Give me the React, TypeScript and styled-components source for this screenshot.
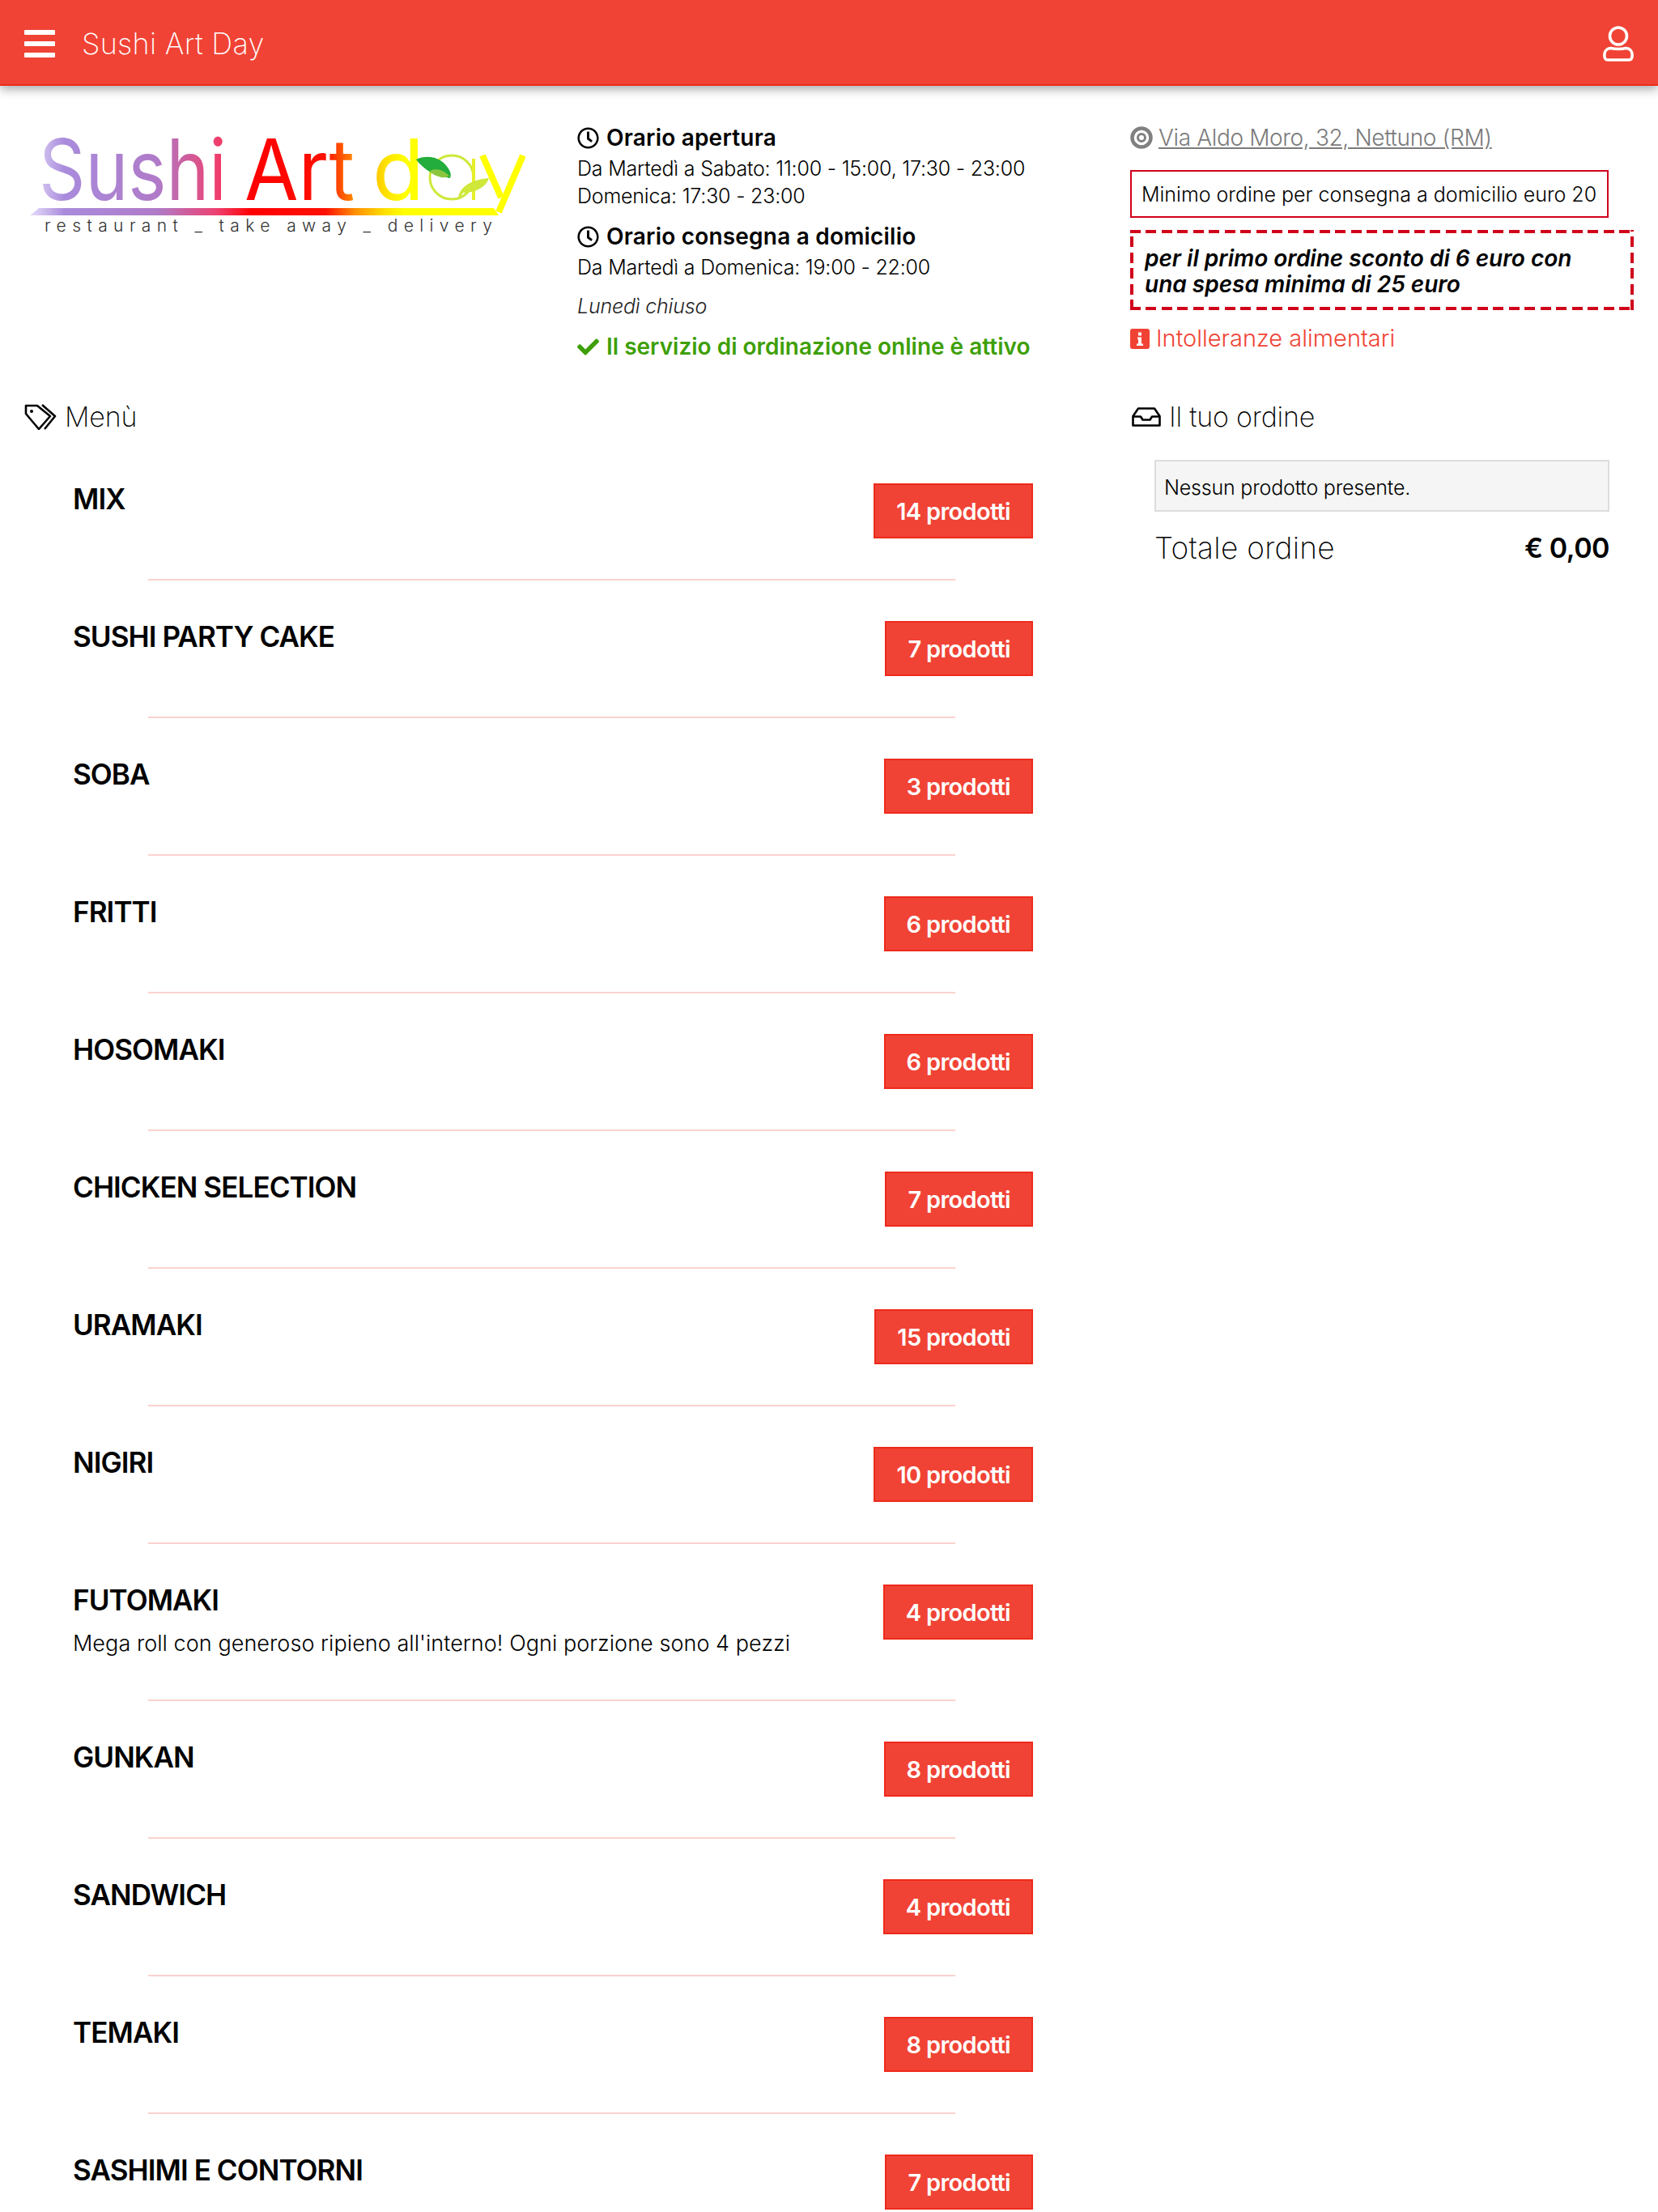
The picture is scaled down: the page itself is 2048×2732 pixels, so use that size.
import styled, { createGlobalStyle } from "styled-components";
import { FaCheck, FaRegClock } from "react-icons/fa";

const GlobalStyle = createGlobalStyle`
    html, body {
        margin: 0;
        padding: 0;
        overflow: hidden;
        background: #fff;
    }
    body {
        font-family: "Inter", "Liberation Sans", sans-serif;
        color: #000;
    }
`;

const TopBar = styled.header`
    height: 106px;
    box-sizing: border-box;
    background: #f04335;
    border-bottom: 2px solid #ee2a1b;
    box-shadow: 0 4px 12px rgba(0, 0, 0, 0.35);
    display: flex;
    align-items: center;
    padding: 4px 30px 0;
    color: #fff;
`;

const MenuIcon = styled.div`
    width: 38px;
    height: 34px;
    display: flex;
    flex-direction: column;
    justify-content: space-between;
    margin-right: 33px;
    span {
        display: block;
        height: 6px;
        border-radius: 1px;
        background: #fff;
    }
`;

const BarTitle = styled.div`
    font-size: 36px;
    font-weight: 200;
    letter-spacing: 0.3px;
    flex: 1;
`;

const TopRow = styled.section`
    display: grid;
    grid-template-columns: 713px 683px 1fr;
    padding-top: 47px;
`;

const LogoCell = styled.div`
    margin-top: -11px;
    padding-left: 37px;
`;

const Hours = styled.div`
    display: flex;
    flex-direction: column;
`;

const InfoTitle = styled.div<{ $gap?: number }>`
    display: flex;
    align-items: center;
    gap: 9px;
    font-size: 28px;
    line-height: 34px;
    font-weight: 600;
    letter-spacing: 0.2px;
    margin-top: ${(props) => props.$gap ?? 0}px;
    margin-bottom: 4px;
    svg {
        width: 27px;
        height: 27px;
    }
`;

const InfoLine = styled.div`
    font-size: 25px;
    line-height: 34px;
    font-weight: 300;
    letter-spacing: -0.2px;
`;

const ClosedNote = styled.div`
    font-size: 25px;
    line-height: 34px;
    font-weight: 300;
    font-style: italic;
    letter-spacing: -0.2px;
    margin-top: 14px;
    color: #222;
`;

const ActiveNote = styled.div`
    display: flex;
    align-items: center;
    gap: 9px;
    margin-top: 16px;
    font-size: 28px;
    line-height: 34px;
    font-weight: 600;
    color: #3e9f07;
    svg {
        width: 27px;
        height: 27px;
    }
`;

const SideInfo = styled.div`
    display: flex;
    flex-direction: column;
    align-items: flex-start;
`;

const Address = styled.a`
    display: flex;
    align-items: center;
    gap: 7px;
    font-size: 28px;
    line-height: 34px;
    font-weight: 300;
    letter-spacing: -0.35px;
    color: #7b7b7b;
    span {
        text-decoration: underline;
    }
`;

const MinimumBox = styled.div`
    box-sizing: border-box;
    width: 591px;
    height: 59px;
    margin-top: 23px;
    border: 2px solid #d0021b;
    padding: 0 12px;
    display: flex;
    align-items: center;
    font-size: 25px;
    font-weight: 300;
    white-space: nowrap;
`;

const dash = "#d0021b 0 13px, transparent 13px 19.5px";

const PromoBox = styled.div`
    box-sizing: border-box;
    width: 622px;
    height: 99px;
    margin-top: 15px;
    padding: 19px 18px 0;
    font-size: 28px;
    line-height: 32px;
    font-weight: 600;
    font-style: italic;
    background:
        repeating-linear-gradient(90deg, ${dash}) top / 100% 4px no-repeat,
        repeating-linear-gradient(90deg, ${dash}) bottom / 100% 4px no-repeat,
        repeating-linear-gradient(0deg, ${dash}) left / 4px 100% no-repeat,
        repeating-linear-gradient(0deg, ${dash}) right / 4px 100% no-repeat;
`;

const AllergyLink = styled.a`
    display: flex;
    align-items: center;
    gap: 8px;
    margin-top: 18px;
    font-size: 29px;
    line-height: 34px;
    font-weight: 300;
    color: #f04335;
    svg {
        width: 24px;
        height: 25px;
    }
`;

const BottomRow = styled.section`
    display: grid;
    grid-template-columns: 1396px 1fr;
    padding-top: 50px;
`;

const SectionTitle = styled.h2<{ $indent?: number }>`
    display: flex;
    align-items: center;
    gap: 10px;
    margin: 0;
    padding-left: ${(props) => props.$indent ?? 0}px;
    font-size: 34px;
    line-height: 40px;
    font-weight: 200;
    letter-spacing: -0.2px;
`;

const MenuList = styled.div`
    width: 1276px;
    margin-top: 12px;
`;

const Category = styled.div`
    display: flex;
    justify-content: space-between;
    align-items: flex-start;
    padding: 50px 0 50px 90px;
`;

const CategoryName = styled.h3`
    margin: 0;
    font-size: 35px;
    line-height: 38px;
    font-weight: 600;
    letter-spacing: -0.9px;
`;

const CategoryNote = styled.p`
    margin: 16px 0 0;
    font-size: 27px;
    line-height: 38px;
    font-weight: 300;
    letter-spacing: 0.05px;
`;

const CountBadge = styled.span`
    flex: none;
    box-sizing: border-box;
    height: 68px;
    display: flex;
    align-items: center;
    padding: 0 26px;
    background: #f04335;
    border: 2px solid #ee2a1b;
    color: #fff;
    font-size: 29px;
    font-weight: 600;
    letter-spacing: -0.7px;
`;

const Divider = styled.div`
    height: 2px;
    width: 997px;
    margin-left: 183px;
    background: #fbd2cf;
`;

const OrderPanel = styled.div`
    width: 562px;
    margin: 33px 0 0 30px;
`;

const EmptyOrder = styled.div`
    box-sizing: border-box;
    height: 64px;
    padding: 4px 10px 0;
    display: flex;
    align-items: center;
    background: #f5f5f5;
    border: 2px solid #ddd;
    font-size: 25px;
    font-weight: 300;
    letter-spacing: -0.2px;
`;

const TotalRow = styled.div`
    display: flex;
    justify-content: space-between;
    align-items: center;
    margin-top: 23px;
    font-size: 37px;
    line-height: 44px;
    font-weight: 200;
    letter-spacing: 0.3px;
    strong {
        font-size: 34px;
        font-weight: 600;
        letter-spacing: -0.5px;
    }
`;

const categories = [
    { name: "MIX", count: 14 },
    { name: "SUSHI PARTY CAKE", count: 7 },
    { name: "SOBA", count: 3 },
    { name: "FRITTI", count: 6 },
    { name: "HOSOMAKI", count: 6 },
    { name: "CHICKEN SELECTION", count: 7 },
    { name: "URAMAKI", count: 15 },
    { name: "NIGIRI", count: 10 },
    { name: "FUTOMAKI", count: 4, note: "Mega roll con generoso ripieno all'interno! Ogni porzione sono 4 pezzi" },
    { name: "GUNKAN", count: 8 },
    { name: "SANDWICH", count: 4 },
    { name: "TEMAKI", count: 8 },
    { name: "SASHIMI E CONTORNI", count: 7 },
];

const Logo = () => (
    <svg width="620" height="155" viewBox="37 142 620 155" fill="none">
        <defs>
            <linearGradient id="logoFill" gradientUnits="userSpaceOnUse" x1="37" y1="0" x2="646" y2="0">
                <stop offset="0" stopColor="#e6defa" />
                <stop offset="0.07" stopColor="#a98bdc" />
                <stop offset="0.26" stopColor="#b07ac8" />
                <stop offset="0.38" stopColor="#ee4070" />
                <stop offset="0.45" stopColor="#ff0000" />
                <stop offset="0.6" stopColor="#ff1000" />
                <stop offset="0.66" stopColor="#ff9000" />
                <stop offset="0.72" stopColor="#ffe000" />
                <stop offset="0.76" stopColor="#ffff00" />
                <stop offset="1" stopColor="#ffff00" />
            </linearGradient>
        </defs>
        <text x="48" y="247" fontFamily="Inter" fontSize="104" fontWeight="400" fill="url(#logoFill)" textLength="232" lengthAdjust="spacingAndGlyphs">Sushi</text>
        <text x="302" y="247" fontFamily="Inter" fontSize="104" fontWeight="400" fill="url(#logoFill)" textLength="136" lengthAdjust="spacingAndGlyphs">Art</text>
        <text x="460" y="247" fontFamily="Inter" fontSize="104" fontWeight="400" fill="url(#logoFill)" textLength="64" lengthAdjust="spacingAndGlyphs">d</text>
        <circle cx="558" cy="219" r="27" stroke="#cfe83a" strokeWidth="3" />
        <path d="M585 196 V247" stroke="#e6f02a" strokeWidth="4" />
        <path d="M514 197 C528 190 548 194 556 212 C558 220 556 221 552 219 C538 218 524 210 514 197Z" fill="#22ad3c" />
        <path d="M531 211 C540 206 552 212 556 219 C558 214 550 221 545 219 C538 217 533 215 531 211Z" fill="#8cc63f" />
        <path d="M566 247 C566 232 580 222 604 220 C600 232 586 238 572 238Z" fill="#cfe83a" />
        <path d="M596 192 L619 244 M646 192 L616 262" stroke="#ffff00" strokeWidth="8" />
        <path d="M37 266 L48 257 H610 L616 266Z" fill="url(#logoFill)" />
        <text x="55" y="286" fontFamily="Inter" fontSize="21" fontWeight="300" fill="#333" textLength="553" lengthAdjust="spacing">restaurant _ take away _ delivery</text>
    </svg>
);

const TagsIcon = () => (
    <svg width="40" height="32" viewBox="0 0 40 32" fill="none" stroke="#000" strokeWidth="2.6" strokeLinejoin="round">
        <path d="M2 2 H16 L32 15 L18 31 L2 12Z" />
        <circle cx="9" cy="9" r="2" fill="#000" stroke="none" />
        <path d="M22 1 L38 15 L25 31" />
    </svg>
);

const InboxIcon = () => (
    <svg width="36" height="24" viewBox="0 0 36 24" fill="none" stroke="#000" strokeWidth="2.6" strokeLinejoin="round">
        <path d="M8 1.500 H28 L34.500 11 V22.500 H1.500 V11Z" />
        <path d="M1.500 11.500 H11 L13.500 15.500 H22.500 L25 11.500 H34.500" />
    </svg>
);

const UserIcon = () => (
    <svg width="38" height="44" viewBox="0 0 38 44" fill="none" stroke="#fff" strokeWidth="3.6">
        <circle cx="19" cy="12.500" r="10.500" />
        <path d="M10 27.500 C14 28.800 24 28.800 28 27.500 C33 27.500 36.200 31 36.200 36 C36.200 40 35 42 32 42 H6 C3 42 1.800 40 1.800 36 C1.800 31 5 27.500 10 27.500Z" />
    </svg>
);

const InfoSquareIcon = () => (
    <svg viewBox="0 0 24 25">
        <rect width="24" height="25" rx="3" fill="#f04335" />
        <path d="M9 10.500 H14 V18.500 H16 V21 H8 V18.500 H10 V13 H9Z M10 4.500 H14 V8.500 H10Z" fill="#fff" />
    </svg>
);

const TargetIcon = () => (
    <svg width="28" height="28" viewBox="0 0 28 28" fill="none" stroke="#808080">
        <circle cx="14" cy="14" r="11.500" strokeWidth="4.500" />
        <circle cx="14" cy="14" r="4.500" strokeWidth="3" />
    </svg>
);

const App = () => {
    return (
        <>
            <GlobalStyle />
            <TopBar>
                <MenuIcon>
                    <span />
                    <span />
                    <span />
                </MenuIcon>
                <BarTitle>Sushi Art Day</BarTitle>
                <UserIcon />
            </TopBar>
            <TopRow>
                <LogoCell>
                    <Logo />
                </LogoCell>
                <Hours>
                    <InfoTitle>
                        <FaRegClock />
                        Orario apertura
                    </InfoTitle>
                    <InfoLine>Da Martedì a Sabato: 11:00 - 15:00, 17:30 - 23:00</InfoLine>
                    <InfoLine>Domenica: 17:30 - 23:00</InfoLine>
                    <InfoTitle $gap={16}>
                        <FaRegClock />
                        Orario consegna a domicilio
                    </InfoTitle>
                    <InfoLine>Da Martedì a Domenica: 19:00 - 22:00</InfoLine>
                    <ClosedNote>Lunedì chiuso</ClosedNote>
                    <ActiveNote>
                        <FaCheck />
                        Il servizio di ordinazione online è attivo
                    </ActiveNote>
                </Hours>
                <SideInfo>
                    <Address>
                        <TargetIcon />
                        <span>Via Aldo Moro, 32, Nettuno (RM)</span>
                    </Address>
                    <MinimumBox>Minimo ordine per consegna a domicilio euro 20</MinimumBox>
                    <PromoBox>
                        per il primo ordine sconto di 6 euro con
                        <br />
                        una spesa minima di 25 euro
                    </PromoBox>
                    <AllergyLink>
                        <InfoSquareIcon />
                        Intolleranze alimentari
                    </AllergyLink>
                </SideInfo>
            </TopRow>
            <BottomRow>
                <div>
                    <SectionTitle $indent={30}>
                        <TagsIcon />
                        Menù
                    </SectionTitle>
                    <MenuList>
                        {categories.map((category, index) => (
                            <div key={category.name}>
                                {index > 0 && <Divider />}
                                <Category>
                                    <div>
                                        <CategoryName>{category.name}</CategoryName>
                                        {category.note && <CategoryNote>{category.note}</CategoryNote>}
                                    </div>
                                    <CountBadge>{category.count} prodotti</CountBadge>
                                </Category>
                            </div>
                        ))}
                    </MenuList>
                </div>
                <div>
                    <SectionTitle $indent={2}>
                        <InboxIcon />
                        Il tuo ordine
                    </SectionTitle>
                    <OrderPanel>
                        <EmptyOrder>Nessun prodotto presente.</EmptyOrder>
                        <TotalRow>
                            Totale ordine
                            <strong>€ 0,00</strong>
                        </TotalRow>
                    </OrderPanel>
                </div>
            </BottomRow>
        </>
    );
};

export default App;
